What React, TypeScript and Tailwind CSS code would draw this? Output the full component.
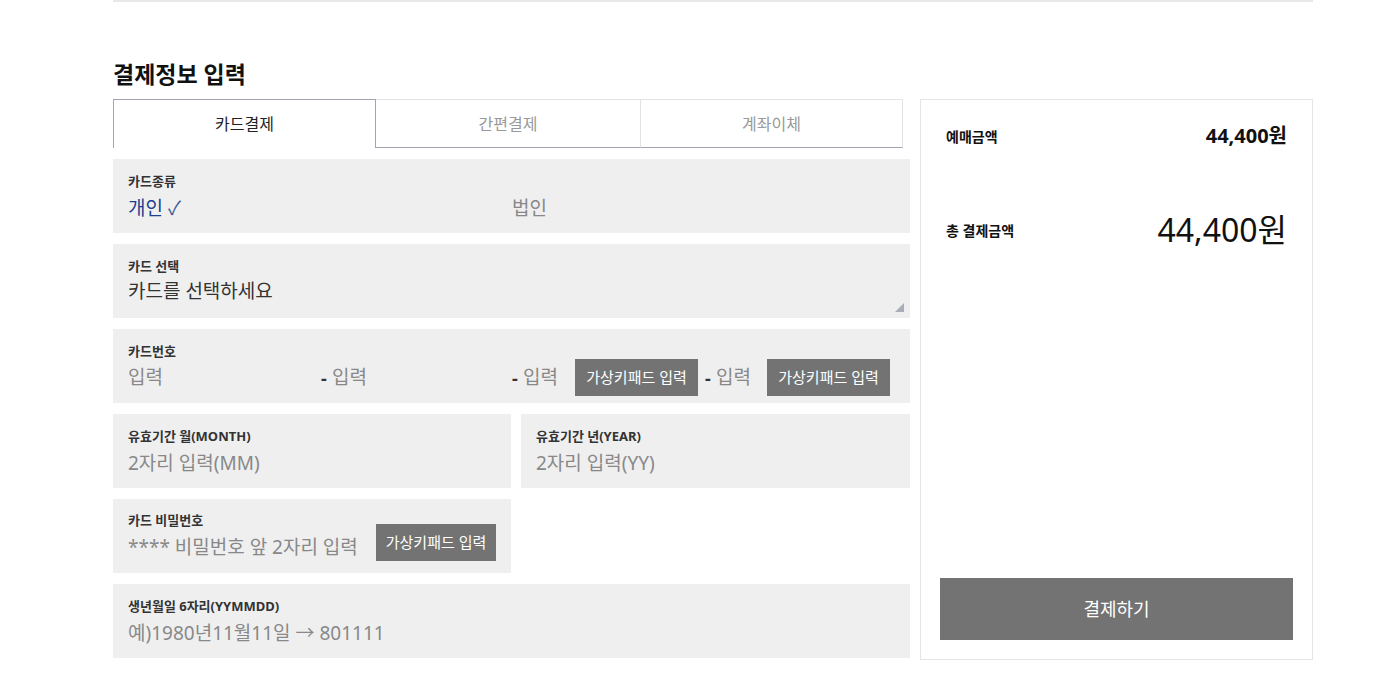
import React from "react";

const font = { fontFamily: '"Noto Sans", "Noto Sans CJK KR", sans-serif' };

function Label({ children }: { children: React.ReactNode }) {
  return <div className="text-[13px] font-bold text-[#333] leading-[16px]">{children}</div>;
}

function KeypadBtn() {
  return (
    <div className="flex h-[37px] w-[123px] items-center justify-center bg-[#737373] text-[15px] text-white">
      가상키패드 입력
    </div>
  );
}

function Dash() {
  return <span className="w-[11px] text-[18px] font-bold leading-none text-[#333]">-</span>;
}

export default function App() {
  return (
    <div style={font} className="min-h-[681px] w-[1378px] bg-white">
      <div className="mx-[113px] w-[1200px]">
        <div className="h-[2px] bg-[#e8e8e8]" />
        <h2 className="mt-[57px] h-[34px] text-[23px] font-bold leading-[30px] text-[#111]">결제정보 입력</h2>
        <div className="mt-[6px] flex gap-[10px]">
          {/* Left column */}
          <div className="w-[797px]">
            <div className="flex h-[49px] w-[790px]">
              <div className="flex w-[263px] items-center justify-center border-x border-t border-[#a3a3b3] bg-white text-[16px] text-[#222]">
                카드결제
              </div>
              <div className="flex w-[264px] items-center justify-center border-t border-b border-t-[#e3e3e3] border-b-[#a3a3b3] text-[16px] text-[#999]">
                간편결제
              </div>
              <div className="flex w-[263px] items-center justify-center border-t border-b border-l border-r border-t-[#e3e3e3] border-l-[#e3e3e3] border-r-[#e3e3e3] border-b-[#a3a3b3] text-[16px] text-[#999]">
                계좌이체
              </div>
            </div>

            <div className="mt-[11px] flex flex-col gap-[11px]">
              {/* 카드종류 */}
              <div className="h-[74px] bg-[#efefef] px-[15px] pt-[14px]">
                <Label>카드종류</Label>
                <div className="mt-[6px] flex text-[19px] leading-[26px]">
                  <span className="w-[384px] text-[#1e3f8f]">
                    개인 <span className="text-[#3a5a9a]">✓</span>
                  </span>
                  <span className="text-[#888]">법인</span>
                </div>
              </div>

              {/* 카드 선택 */}
              <div className="relative h-[74px] bg-[#efefef] px-[15px] pt-[14px]">
                <Label>카드 선택</Label>
                <div className="mt-[4px] text-[19px] leading-[26px] text-[#333]">카드를 선택하세요</div>
                <svg className="absolute bottom-[6px] right-[6px]" width="9" height="9" viewBox="0 0 9 9">
                  <polygon points="9,0 9,9 0,9" fill="#a8adb8" />
                </svg>
              </div>

              {/* 카드번호 */}
              <div className="h-[74px] bg-[#efefef] px-[15px] pt-[14px]">
                <Label>카드번호</Label>
                <div className="mt-[0px] flex h-[37px] items-center text-[19px] text-[#888]">
                  <span className="w-[193px]">입력</span>
                  <Dash />
                  <span className="w-[180px]">입력</span>
                  <Dash />
                  <span className="w-[52px]">입력</span>
                  <KeypadBtn />
                  <span className="w-[7px]" />
                  <Dash />
                  <span className="w-[51px]">입력</span>
                  <KeypadBtn />
                </div>
              </div>

              {/* 유효기간 */}
              <div className="flex gap-[10px]">
                <div className="h-[74px] w-[398px] bg-[#efefef] px-[15px] pt-[14px]">
                  <Label>유효기간 월(MONTH)</Label>
                  <div className="mt-[6px] text-[19px] leading-[26px] text-[#888]">2자리 입력(MM)</div>
                </div>
                <div className="h-[74px] w-[389px] bg-[#efefef] px-[15px] pt-[14px]">
                  <Label>유효기간 년(YEAR)</Label>
                  <div className="mt-[6px] text-[19px] leading-[26px] text-[#888]">2자리 입력(YY)</div>
                </div>
              </div>

              {/* 비밀번호 */}
              <div className="flex h-[74px] w-[398px] items-end bg-[#efefef] px-[15px] pb-[12px]">
                <div className="w-[248px] shrink-0 pb-[1px]">
                  <Label>카드 비밀번호</Label>
                  <div className="mt-[6px] whitespace-nowrap text-[19px] leading-[26px] text-[#888]">**** 비밀번호 앞 2자리 입력</div>
                </div>
                <KeypadBtn />
              </div>

              {/* 생년월일 */}
              <div className="h-[74px] bg-[#efefef] px-[15px] pt-[14px]">
                <Label>생년월일 6자리(YYMMDD)</Label>
                <div className="mt-[6px] text-[19px] leading-[26px] text-[#888]">예)1980년11월11일 → 801111</div>
              </div>
            </div>
          </div>

          {/* Right panel */}
          <div className="flex h-[561px] w-[393px] flex-col border border-[#e5e5e5] px-[19px] pb-[19px]">
            <div className="mt-[21px] flex items-center justify-between px-[6px]">
              <span className="text-[14px] font-bold text-[#111]">예매금액</span>
              <span className="text-[20px] font-bold text-[#111]">44,400원</span>
            </div>
            <div className="mt-[55px] flex items-center justify-between px-[6px]">
              <span className="text-[14px] font-bold text-[#111]">총 결제금액</span>
              <span className="text-[32px] text-[#111]">44,400원</span>
            </div>
            <div className="flex-1" />
            <div className="flex h-[62px] items-center justify-center bg-[#737373] text-[18px] text-white">
              결제하기
            </div>
          </div>
        </div>
      </div>
    </div>
  );
}
